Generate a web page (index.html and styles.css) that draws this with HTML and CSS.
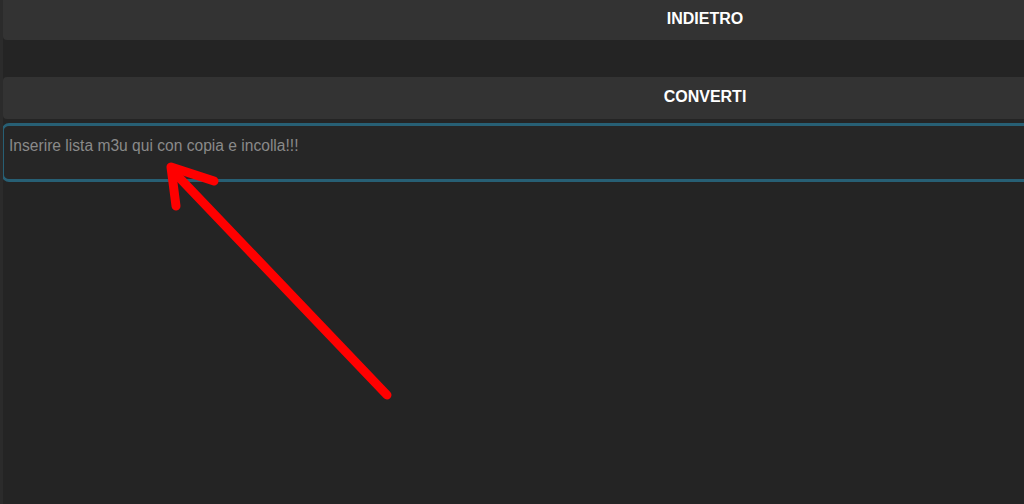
FILE: index.html
```html
<!DOCTYPE html>
<html lang="it">
<head>
    <meta charset="UTF-8">
    <meta name="viewport" content="width=device-width, initial-scale=1.0">
    <title>Convertitore M3U</title>
    <link rel="stylesheet" href="styles.css">
</head>
<body>
    <div class="page">
        <button class="button">INDIETRO</button>
        <div class="spacer"></div>
        <button class="button">CONVERTI</button>
        <textarea class="playlist" placeholder="Inserire lista m3u qui con copia e incolla!!!"></textarea>
    </div>

    <svg class="arrow" width="420" height="420" viewBox="0 0 420 420">
        <g fill="none" stroke="#ff0000" stroke-width="9" stroke-linecap="round" stroke-linejoin="round">
            <path d="M387 395 L172 170"/>
            <path d="M214 181 L171 167 L176 206"/>
        </g>
    </svg>
</body>
</html>
```

FILE: styles.css
```css
* {
    margin: 0;
    padding: 0;
    box-sizing: border-box;
}
html, body {
    height: 100%;
}
body {
    font-family: 'Liberation Sans', Arial, sans-serif;
    background-color: #242424;
    border-left: 3px solid #2b2b2b;
    overflow: hidden;
    position: relative;
}
.page {
    width: 1404px;
    display: flex;
    flex-direction: column;
}
.button {
    height: 40px;
    padding-bottom: 3px;
    background-color: #333333;
    color: #ffffff;
    font-family: 'Liberation Sans', Arial, sans-serif;
    font-weight: bold;
    font-size: 16px;
    border: none;
    border-radius: 0 0 4px 4px;
    text-align: center;
    cursor: pointer;
}
.button + .spacer + .button {
    height: 42px;
    border-radius: 4px;
}
.spacer {
    height: 37px;
}
.playlist {
    margin-top: 4px;
    margin-left: -1px;
    height: 59px;
    background-color: #262626;
    border: 3px solid #275f74;
    border-left-width: 2px;
    border-radius: 7px;
    padding: 11px 5px;
    color: #dddddd;
    caret-color: #ffffff;
    font-family: 'Liberation Sans', Arial, sans-serif;
    font-size: 15.6px;
    resize: none;
    outline: none;
}
.playlist::placeholder {
    color: #8a8a8a;
}
.arrow {
    position: absolute;
    top: 0;
    left: -3px;
    pointer-events: none;
}
```
